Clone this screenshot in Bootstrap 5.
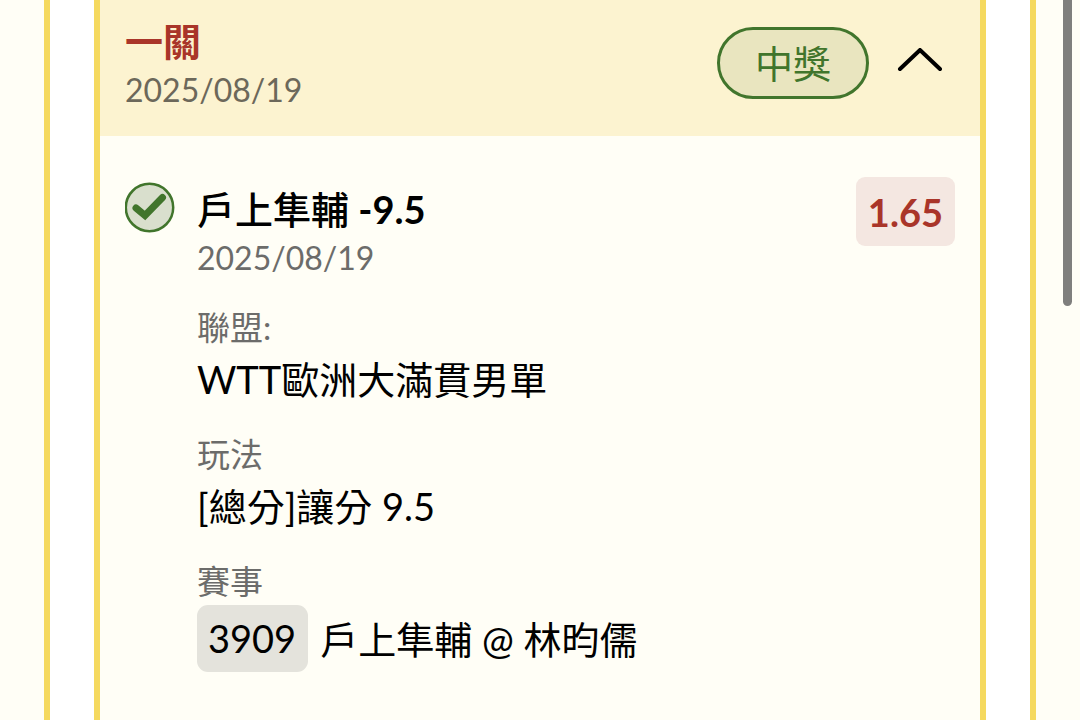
<!DOCTYPE html>
<html lang="zh-Hant">
<head>
<meta charset="utf-8">
<meta name="viewport" content="width=device-width, initial-scale=1">
<title>投注紀錄</title>
<link href="https://cdn.jsdelivr.net/npm/bootstrap@5.3.0/dist/css/bootstrap.min.css" rel="stylesheet">
<style>
  :root { --gold: #f5d95f; --paper: #fffef6; --win: #41752c; --red: #a93529; }
  body { font-family: Lato, "Noto Sans CJK TC", sans-serif; font-size: 38px; line-height: 48px; color: #000; background: var(--paper); overflow: hidden; }
  .ticket-frame { border: solid var(--gold); border-width: 0 6px; background: #fff; padding: 0 44px; margin: 0 44px; }
  .ticket { border: solid var(--gold); border-width: 0 6px; background: var(--paper); }
  .ticket-head { background: #fcf3d0; padding: 17px 25px 21px; }
  .ticket-body { padding: 41px 25px 47px; }
  .ticket-title { font-size: 38px; line-height: 48px; font-weight: 700; color: var(--red); }
  .pick-title { font-size: 38px; line-height: 48px; font-weight: 700; }
  .pick-name { font-weight: 500; }
  .date-text { font-size: 32px; line-height: 50px; color: #6c6c6a; }
  .field-label { font-size: 33px; line-height: 48px; font-weight: 400; color: #6c6c6a; }
  .ticket-head .date-text { color: #6c685a; }
  .head-actions { padding-top: 10px; }
  .status-pill { border: 3px solid var(--win); background: #e9e5bf; color: var(--win); line-height: 66px; padding: 0 35px; }
  .toggle-btn { line-height: 0; padding: 8px; margin: 0 4px 0 20px; }
  .pick-icon { margin: 5px 22px 0 0; }
  .pick-main { padding-top: 8px; }
  .odds { background: #f4e7e1; color: var(--red); font-size: 38px; font-weight: 700; line-height: 67px; border-radius: 9px; padding: 2px 12px 0; }
  .field-group { margin: 0 0 23px; }
  .field-value { line-height: 56px; margin: 0; }
  .match-no { background: #e4e3dc; line-height: 67px; border-radius: 11px; padding: 0 12px 0 11px; margin-right: 12px; }
  .scroll-thumb { top: 0; right: 8px; width: 9px; height: 306px; background: #7f7f7d; border-radius: 0 0 5px 5px; }
</style>
</head>
<body>
<main class="ticket-frame min-vh-100 d-flex flex-column">
  <article class="ticket flex-grow-1">
    <header class="ticket-head d-flex align-items-start justify-content-between">
      <div>
        <h1 class="ticket-title m-0">一關</h1>
        <time class="date-text d-block" datetime="2025-08-19">2025/08/19</time>
      </div>
      <div class="head-actions d-flex align-items-center">
        <span class="status-pill rounded-pill">中獎</span>
        <button type="button" class="toggle-btn btn border-0" aria-label="收合" aria-expanded="true" data-bs-toggle="collapse" data-bs-target="#pick">
          <svg width="46" height="30" viewBox="0 0 46 30" fill="none" stroke="#000" stroke-width="4" stroke-linecap="round"><path d="M3 21 23 2 43 21"/></svg>
        </button>
      </div>
    </header>
    <section id="pick" class="collapse show">
      <div class="ticket-body d-flex align-items-start">
        <svg class="pick-icon flex-shrink-0" width="50" height="51" viewBox="0 0 50 51" role="img" aria-label="中獎">
          <circle cx="24.500" cy="25.500" r="23.700" fill="#d9dfcd" stroke="#41752c" stroke-width="2.500"/>
          <path d="M11 26 20 33.500 37.500 15.500" fill="none" stroke="#41752c" stroke-width="7" stroke-linecap="round"/>
        </svg>
        <div class="pick-main flex-grow-1">
          <h2 class="pick-title m-0"><span class="pick-name">戶上隼輔</span> -9.5</h2>
          <time class="date-text d-block" datetime="2025-08-19">2025/08/19</time>
          <dl class="mb-0 mt-3 pt-1">
            <div class="field-group">
              <dt class="field-label">聯盟:</dt>
              <dd class="field-value">WTT歐洲大滿貫男單</dd>
            </div>
            <div class="field-group">
              <dt class="field-label">玩法</dt>
              <dd class="field-value">[總分]讓分 9.5</dd>
            </div>
            <div>
              <dt class="field-label">賽事</dt>
              <dd class="field-value d-flex align-items-center"><span class="match-no">3909</span><span>戶上隼輔 @ 林昀儒</span></dd>
            </div>
          </dl>
        </div>
        <strong class="odds">1.65</strong>
      </div>
    </section>
  </article>
</main>
<div class="scroll-thumb position-fixed"></div>
<script src="https://cdn.jsdelivr.net/npm/bootstrap@5.3.0/dist/js/bootstrap.bundle.min.js"></script>
</body>
</html>
